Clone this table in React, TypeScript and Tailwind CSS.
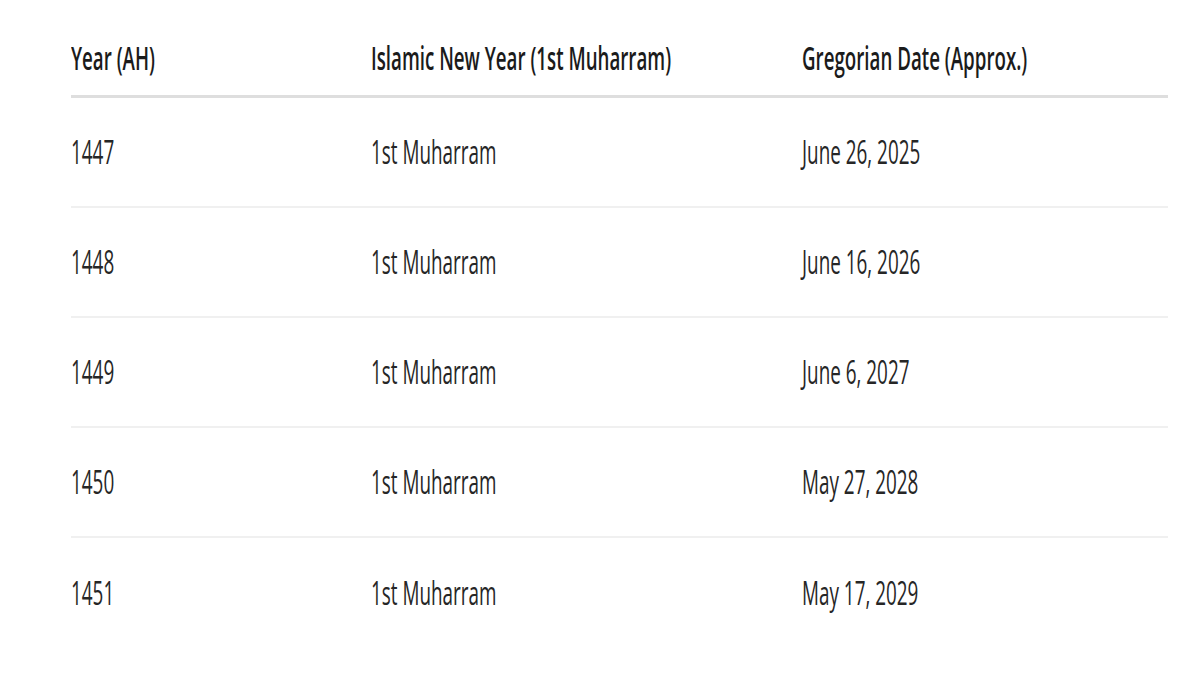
const rows = [
  { year: "1447", date: "June 26, 2025" },
  { year: "1448", date: "June 16, 2026" },
  { year: "1449", date: "June 6, 2027" },
  { year: "1450", date: "May 27, 2028" },
  { year: "1451", date: "May 17, 2029" },
];

// Screenshot text is horizontally squeezed, so each cell label is narrowed.
function Cell({ children, head }: { children: React.ReactNode; head?: boolean }) {
  return (
    <div className="flex items-center">
      <span
        className={`inline-block origin-left whitespace-nowrap text-[32px] leading-none ${
          head ? "scale-x-[0.585] font-semibold text-[#1b1b1b]" : "scale-x-[0.59] font-normal text-[#262626]"
        }`}
      >
        {children}
      </span>
    </div>
  );
}

export default function App() {
  return (
    <div
      className="min-h-[675px] w-[1200px] bg-white pl-[71px] pt-[21px]"
      style={{ fontFamily: '"Open Sans", "Noto Sans", sans-serif' }}
    >
      <div className="w-[1097px]">
        <div className="grid h-[77px] grid-cols-[300px_431px_1fr] border-b-[3px] border-[#dedede]">
          <Cell head>Year (AH)</Cell>
          <Cell head>Islamic New Year (1st Muharram)</Cell>
          <Cell head>Gregorian Date (Approx.)</Cell>
        </div>
        {rows.map((r, i) => (
          <div
            key={r.year}
            className={`grid h-[110px] grid-cols-[300px_431px_1fr] ${
              i < rows.length - 1 ? "border-b-[2px] border-[#f0f0f0]" : ""
            }`}
          >
            <Cell>{r.year}</Cell>
            <Cell>1st Muharram</Cell>
            <Cell>{r.date}</Cell>
          </div>
        ))}
      </div>
    </div>
  );
}
